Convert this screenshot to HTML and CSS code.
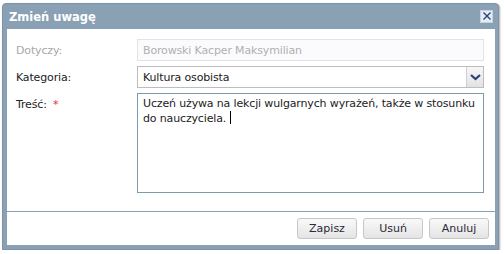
FILE: index.html
```html
<!DOCTYPE html>
<html lang="pl">
<head>
    <meta charset="UTF-8">
    <title>Zmień uwagę</title>
    <link rel="stylesheet" href="styles.css">
</head>
<body>
    <div class="window">
        <div class="titlebar">
            <span class="title">Zmień uwagę</span>
            <span class="close">
                <svg width="10" height="10" viewBox="0 0 10 10"><path d="M1.5 1.5 L8.5 8.5 M8.5 1.5 L1.5 8.5" stroke="#2b3f7a" stroke-width="1.4"/></svg>
            </span>
        </div>
        <div class="body">
            <div class="form">
                <label class="label disabled">Dotyczy:</label>
                <div class="field readonly">Borowski Kacper Maksymilian</div>

                <label class="label">Kategoria:</label>
                <div class="field select">
                    <span class="value">Kultura osobista</span>
                    <span class="arrow">
                        <svg width="11" height="7" viewBox="0 0 11 7"><path d="M1 1 L5.5 5 L10 1" stroke="#2b3f7a" stroke-width="2.2" fill="none"/></svg>
                    </span>
                </div>

                <label class="label">Treść: <span class="req">*</span></label>
                <div class="field textarea">Uczeń używa na lekcji wulgarnych wyrażeń, także w stosunku do nauczyciela.<span class="caret"></span></div>
            </div>
            <div class="footer">
                <button>Zapisz</button>
                <button>Usuń</button>
                <button>Anuluj</button>
            </div>
        </div>
    </div>
</body>
</html>
```
FILE: styles.css
```css
* {
    margin: 0;
    padding: 0;
    box-sizing: border-box;
    font-family: 'DejaVu Sans', sans-serif;
}

body {
    background: #fff;
    padding: 3px 0 0 2px;
}

.window {
    width: 497px;
    height: 247px;
    background: #8aa1b5;
    border-radius: 4px 4px 0 0;
    border: 1px solid #7d93a8;
    box-shadow: 1px 1px 2px rgba(0, 0, 0, 0.35);
    display: flex;
    flex-direction: column;
}

.titlebar {
    height: 25px;
    display: flex;
    align-items: center;
    justify-content: space-between;
    padding: 0 5px 0 6px;
}

.title {
    color: #fff;
    font-weight: bold;
    font-size: 11.5px;
}

.close {
    width: 13px;
    height: 13px;
    margin-top: -1px;
    background: #e4ecf6;
    border: 1px solid #c4d2e2;
    display: flex;
    align-items: center;
    justify-content: center;
}

.body {
    flex: 1;
    background: #fff;
    margin: 0 3px 4px 4px;
    display: flex;
    flex-direction: column;
}

.form {
    display: grid;
    grid-template-columns: 121px 347px;
    row-gap: 5px;
    padding: 10px 0 0 9px;
    font-size: 11px;
    letter-spacing: -0.15px;
}

.label {
    color: #222;
    padding-top: 5px;
}

.label.disabled {
    color: #a8a8a8;
}

.req {
    color: #e03030;
    margin-left: 3px;
}

.field {
    border: 1px solid #c9c9c9;
    color: #222;
}

.readonly {
    height: 22px;
    padding: 4px 5px;
    color: #b0b0b0;
    border-color: #e2e2e8;
    background: #fbfbfd;
}

.select {
    height: 22px;
    display: flex;
    align-items: center;
    padding-left: 5px;
    border-color: #bdbdbd;
}

.select .value {
    flex: 1;
}

.arrow {
    width: 17px;
    height: 100%;
    border-left: 1px solid #d0d0d0;
    background: linear-gradient(#f7f7f7, #e2e2e2);
    display: flex;
    align-items: center;
    justify-content: center;
}

.textarea {
    height: 100px;
    padding: 3px 5px;
    line-height: 14px;
    border-color: #7a9bb0;
}

.caret {
    display: inline-block;
    width: 1px;
    height: 13px;
    background: #000;
    margin-left: 4px;
    vertical-align: -2px;
}

.footer {
    margin-top: 18px;
    border-top: 1px solid #8aa1b5;
    display: flex;
    justify-content: flex-end;
    gap: 6px;
    padding: 6px 6px 0 0;
}

button {
    width: 60px;
    height: 21px;
    border: 1px solid #c6c6c6;
    border-radius: 3px;
    background: linear-gradient(#f9f9f9, #e4e4e4);
    color: #2a2a3a;
    font-size: 11px;
}
```
